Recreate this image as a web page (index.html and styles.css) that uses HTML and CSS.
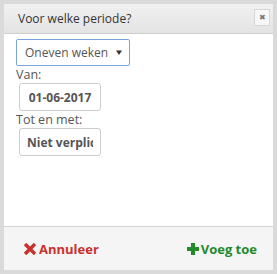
FILE: index.html
```html
<!DOCTYPE html>
<html lang="nl">
<head>
  <meta charset="UTF-8">
  <title>Voor welke periode?</title>
  <link rel="stylesheet" href="styles.css">
</head>
<body>
  <div class="dialog">
    <div class="dialog-header">
      <span class="dialog-title">Voor welke periode?</span>
      <button class="close-btn" type="button">&#x2716;</button>
    </div>

    <div class="dialog-body">
      <div class="select-wrap">
        <select class="period-select">
          <option>Oneven weken</option>
          <option>Even weken</option>
          <option>Elke week</option>
        </select>
        <span class="select-arrow">&#9660;</span>
      </div>

      <label class="field-label">Van:</label>
      <input type="text" class="date-input" value="01-06-2017">

      <label class="field-label">Tot en met:</label>
      <input type="text" class="date-input" placeholder="Niet verplicht">
    </div>

    <div class="dialog-footer">
      <button class="btn btn-cancel" type="button">
        <svg width="14" height="12" viewBox="0 0 14 12"><path d="M2 1 L12 11 M12 1 L2 11" stroke="#c9302c" stroke-width="3.4" stroke-linecap="butt"/></svg>
        Annuleer
      </button>
      <button class="btn btn-add" type="button">
        <svg width="12" height="12" viewBox="0 0 12 12"><path d="M6 0 V12 M0 6 H12" stroke="#23892a" stroke-width="4"/></svg>
        Voeg toe
      </button>
    </div>
  </div>
</body>
</html>
```

FILE: styles.css
```css
body {
  margin: 0;
  background: #dadada;
  font-family: "Open Sans", Arial, sans-serif;
}
.dialog {
  margin: 4px;
  width: 269px;
  height: 266px;
  display: flex;
  flex-direction: column;
  background: #fff;
}
.dialog-header {
  height: 29px;
  display: flex;
  align-items: center;
  justify-content: space-between;
  padding: 0 3px 0 14px;
  background: linear-gradient(#f1f1f1, #e3e3e3);
  border-bottom: 1px solid #cfcfcf;
}
.dialog-title {
  font-size: 12px;
  color: #333;
}
.close-btn {
  width: 16px;
  height: 17px;
  margin-top: -2px;
  padding: 0;
  border: 1px solid #d6d6d6;
  background: #f7f7f7;
  color: #777;
  font-size: 8px;
  line-height: 15px;
  text-align: center;
}
.dialog-body {
  flex: 1;
  padding: 5px 12px 0 12px;
  border-bottom: 1px solid #d4d4d4;
}
.select-wrap {
  position: relative;
  width: 114px;
  height: 27px;
}
.period-select {
  appearance: none;
  width: 114px;
  height: 27px;
  padding: 0 0 0 8px;
  border: 1px solid #78a5db;
  border-radius: 2px;
  background: #fff;
  font-family: "Open Sans", Arial, sans-serif;
  font-size: 12px;
  color: #555;
}
.select-arrow {
  position: absolute;
  right: 6px;
  top: 6px;
  font-size: 10px;
  color: #333;
  transform: scaleY(0.8);
}
.field-label {
  display: block;
  margin-top: 1px;
  font-size: 12.5px;
  line-height: 16px;
  color: #555;
}
.date-input {
  display: block;
  width: 82px;
  height: 28px;
  margin-left: 3px;
  padding: 0 7px;
  box-sizing: border-box;
  border: 1px solid #ccc;
  border-radius: 3px;
  font-family: "Open Sans", Arial, sans-serif;
  font-size: 12px;
  font-weight: bold;
  color: #555;
  text-align: center;
}
.date-input::placeholder {
  color: #555;
  opacity: 1;
}
.dialog-footer {
  height: 43px;
  display: flex;
  align-items: center;
  justify-content: space-between;
  padding: 0 16px 0 19px;
  background: #f5f5f5;
}
.btn {
  display: flex;
  align-items: center;
  gap: 2px;
  padding: 0;
  border: none;
  background: none;
  font-family: "Open Sans", Arial, sans-serif;
  font-size: 13px;
  font-weight: bold;
}
.btn-cancel {
  color: #c9302c;
}
.btn-add {
  color: #23892a;
}
```
